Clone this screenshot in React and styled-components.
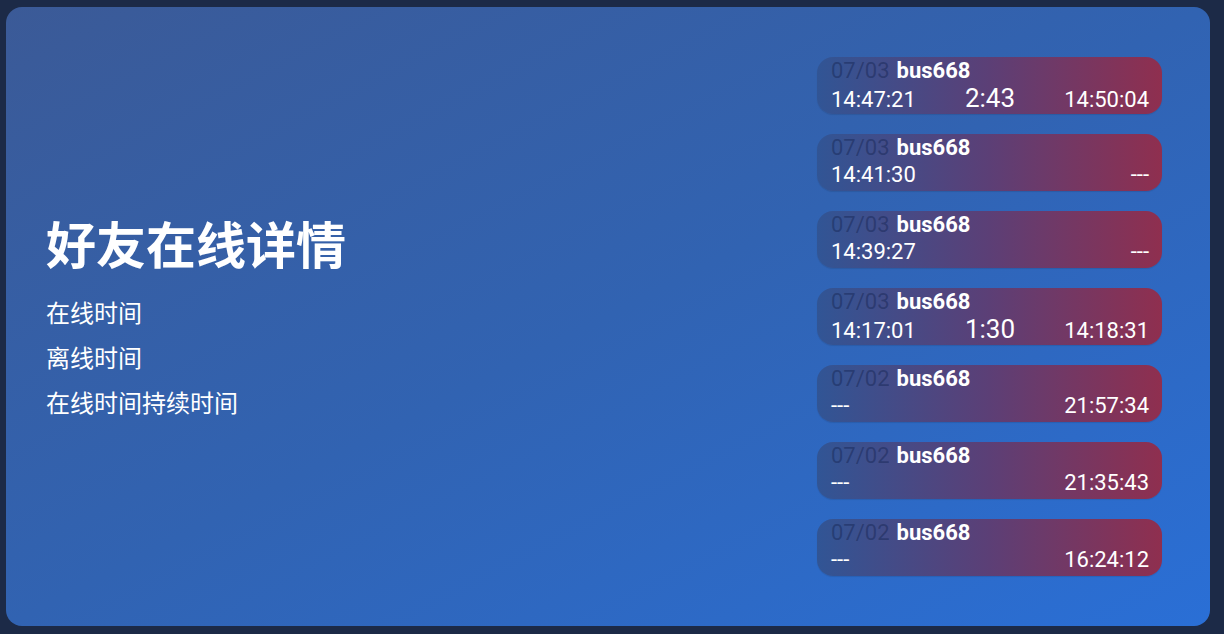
import React from "react";
import styled, { createGlobalStyle } from "styled-components";

const GlobalStyle = createGlobalStyle`
  html, body {
    margin: 0;
    padding: 0;
    background: #1c2a47;
    font-family: Roboto, "Noto Sans CJK SC", sans-serif;
  }
`;

const Page = styled.div`
  box-sizing: border-box;
  height: 634px;
  padding: 7px 14px 8px 6px;
`;

const Card = styled.div`
  box-sizing: border-box;
  height: 100%;
  border-radius: 16px;
  background: linear-gradient(to bottom right, #3b5a97 0%, #3163b2 50%, #2a6fd6 100%);
  display: flex;
  align-items: center;
  justify-content: space-between;
  padding: 0 48px 0 40px;
  color: #fff;
`;

const Info = styled.div`
  display: flex;
  flex-direction: column;
  margin-top: 2px;
`;

const Title = styled.h1`
  margin: 0 0 17px;
  font-family: "Noto Sans CJK SC", sans-serif;
  font-size: 50px;
  font-weight: 700;
  line-height: 60px;
`;

const Label = styled.div`
  font-family: "Noto Sans CJK SC", sans-serif;
  font-size: 24px;
  line-height: 45px;
`;

const List = styled.div`
  display: flex;
  flex-direction: column;
  gap: 20px;
  width: 345px;
`;

const Row = styled.div`
  box-sizing: border-box;
  height: 57px;
  border-radius: 16px;
  padding: 1px 13px 0 14px;
  background: linear-gradient(to right, #315595 0%, #5c3f76 50%, #8f2f4f 100%);
  box-shadow: 0 1px 1px rgba(0, 0, 0, 0.1);
`;

const Head = styled.div`
  display: flex;
  align-items: baseline;
  gap: 7px;
  font-size: 22px;
  line-height: 26px;
`;

const Date = styled.span`
  color: rgba(20, 35, 80, 0.45);
`;

const Name = styled.span`
  font-weight: 700;
`;

const Times = styled.div`
  display: grid;
  grid-template-columns: 1fr auto 1fr;
  align-items: baseline;
  font-size: 22px;
  line-height: 28px;
`;

const Time = styled.span`
  text-align: ${(p) => p.align};
`;

const Duration = styled.span`
  font-size: 26px;
  text-align: center;
`;

const sessions = [
  { date: "07/03", on: "14:47:21", dur: "2:43", off: "14:50:04" },
  { date: "07/03", on: "14:41:30", dur: "", off: "---" },
  { date: "07/03", on: "14:39:27", dur: "", off: "---" },
  { date: "07/03", on: "14:17:01", dur: "1:30", off: "14:18:31" },
  { date: "07/02", on: "---", dur: "", off: "21:57:34" },
  { date: "07/02", on: "---", dur: "", off: "21:35:43" },
  { date: "07/02", on: "---", dur: "", off: "16:24:12" },
];

const App = () => {
  return (
    <Page>
      <GlobalStyle />
      <Card>
        <Info>
          <Title>好友在线详情</Title>
          <Label>在线时间</Label>
          <Label>离线时间</Label>
          <Label>在线时间持续时间</Label>
        </Info>
        <List>
          {sessions.map((s, i) => (
            <Row key={i}>
              <Head>
                <Date>{s.date}</Date>
                <Name>bus668</Name>
              </Head>
              <Times>
                <Time align="left">{s.on}</Time>
                <Duration>{s.dur}</Duration>
                <Time align="right">{s.off}</Time>
              </Times>
            </Row>
          ))}
        </List>
      </Card>
    </Page>
  );
};

export default App;
